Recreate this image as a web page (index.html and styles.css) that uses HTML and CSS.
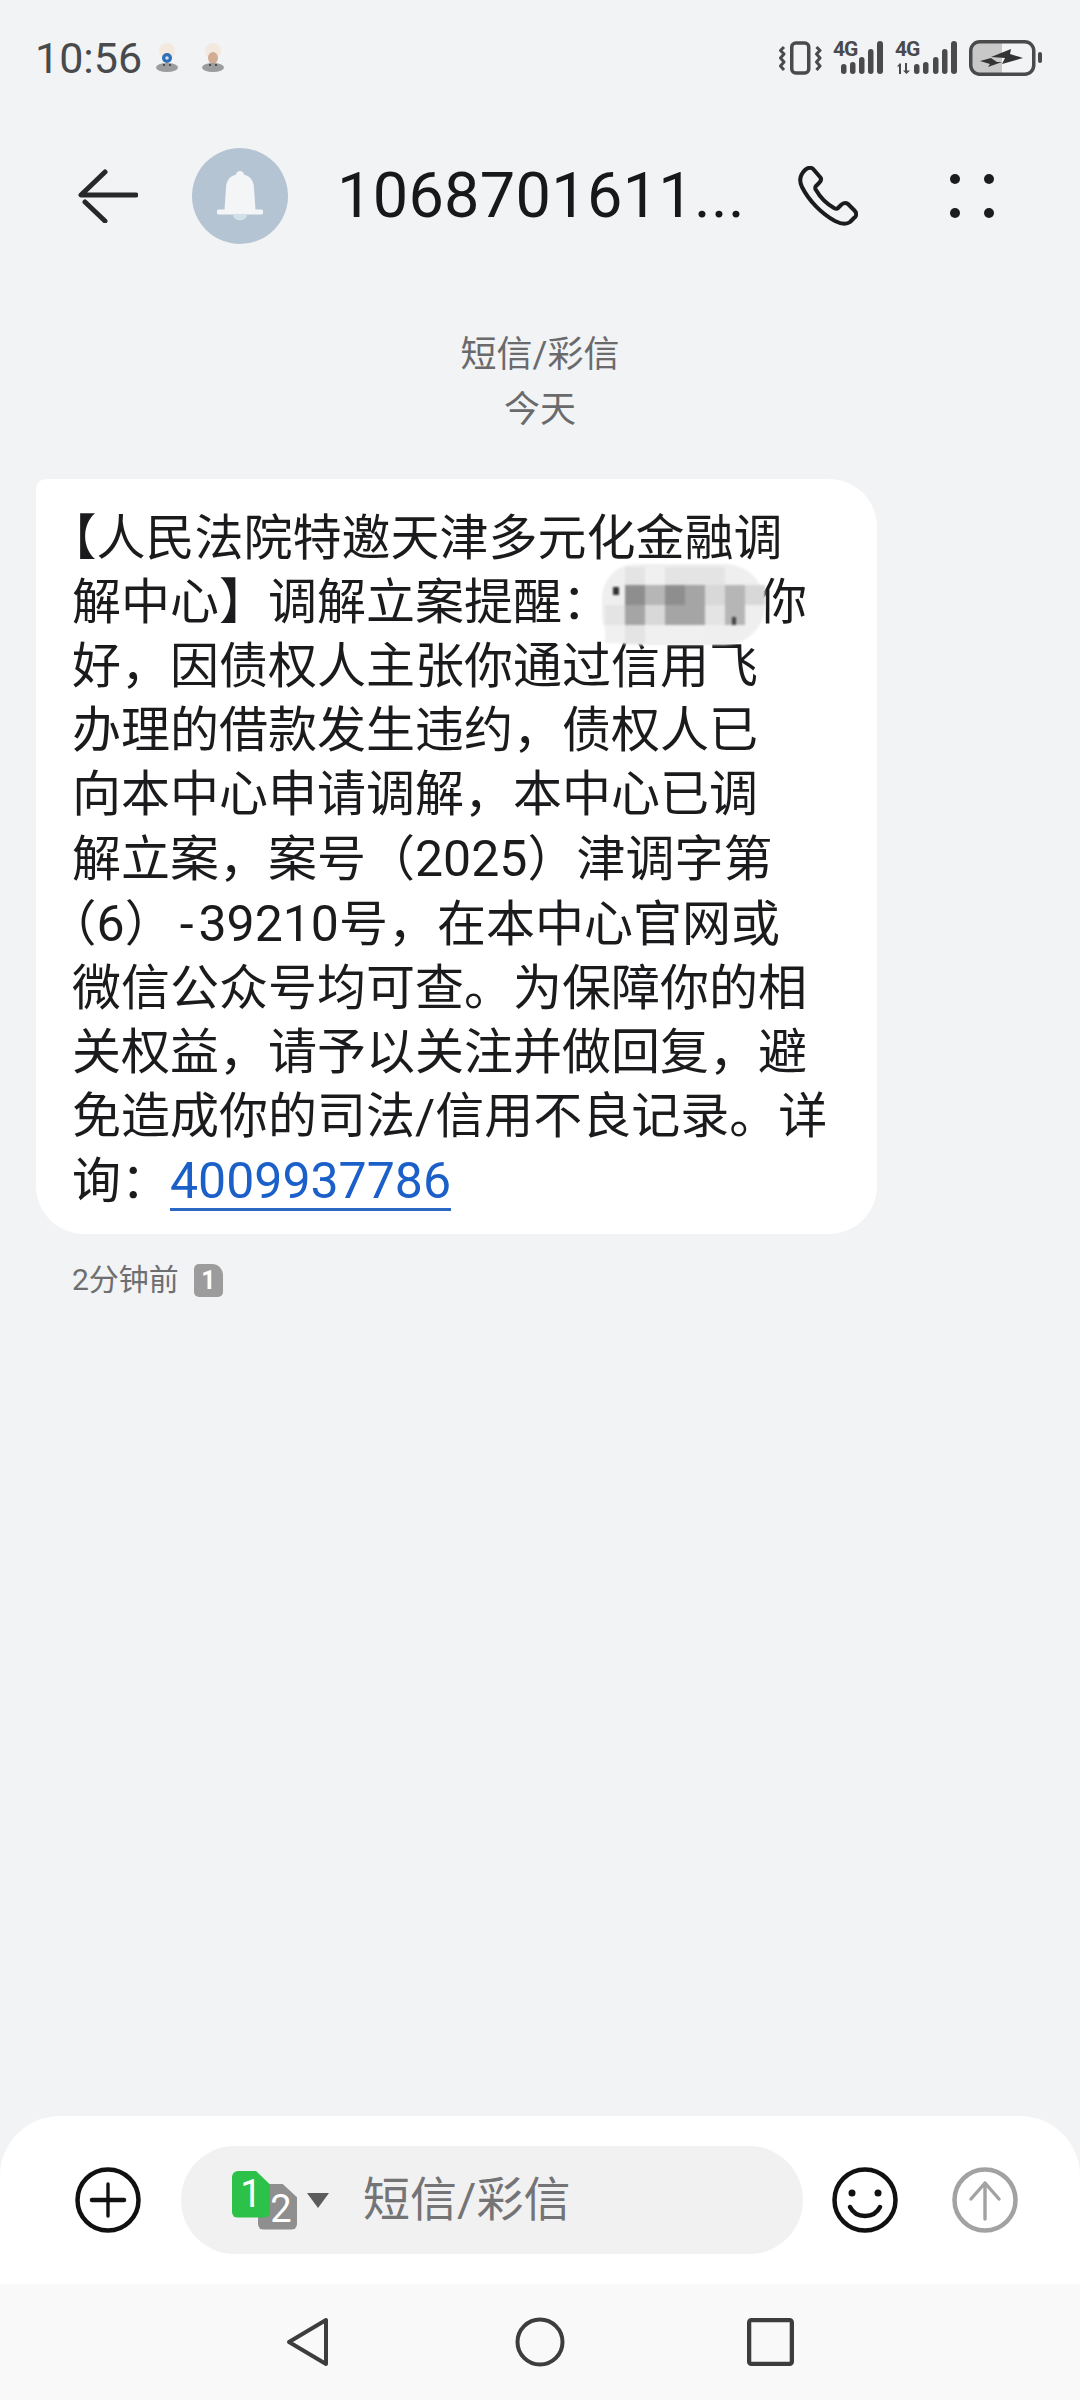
FILE: index.html
```html
<!DOCTYPE html>
<html lang="zh-CN">
<head>
<meta charset="utf-8">
<title>短信</title>
<link rel="stylesheet" href="styles.css">
</head>
<body>
<div class="screen">
  <div class="status">
    <div class="status-left">
      <span class="time">10:56</span>
      <svg class="mascot" viewBox="0 0 26 30"><ellipse cx="13" cy="8" rx="8" ry="8" fill="#f3e9df"/><circle cx="13" cy="15" r="5" fill="#2f6fb8"/><circle cx="13" cy="15" r="1.800" fill="#cfe0f2"/><ellipse cx="13" cy="24.500" rx="11" ry="4.500" fill="#9a9c9e"/><circle cx="10" cy="22" r="1" fill="#333"/><circle cx="16" cy="22" r="1" fill="#333"/></svg>
      <svg class="mascot" viewBox="0 0 26 30"><ellipse cx="13" cy="8" rx="8" ry="8" fill="#f3e9df"/><ellipse cx="13" cy="15" rx="5" ry="6" fill="#d2ad93"/><ellipse cx="13" cy="24.500" rx="11" ry="4.500" fill="#9a9c9e"/><circle cx="10" cy="22" r="1" fill="#333"/><circle cx="16" cy="22" r="1" fill="#333"/></svg>
    </div>
    <div class="status-right">
      <svg class="st-vib" viewBox="0 0 43 36" fill="none" stroke="#4a4a4c" stroke-linejoin="round"><rect x="12.750" y="3" width="17" height="30" rx="4" stroke-width="3.500"/><path d="M5 7L1.500 10.500 5 14 1.500 18 5 22 1.500 26 5 30" stroke-width="3"/><path d="M37.500 7L41 10.500 37.500 14 41 18 37.500 22 41 26 37.500 30" stroke-width="3"/></svg>
      <div class="st-sig">
        <svg viewBox="0 0 50 36" class="st-bars" fill="#4a4a4c"><rect x="8" y="24" width="5.500" height="10" rx="2.700"/><rect x="17" y="22" width="5.500" height="12" rx="2.700"/><rect x="26" y="17" width="5.500" height="17" rx="2.700"/><rect x="35" y="9" width="5.500" height="25" rx="2.700"/><rect x="44" y="1" width="6" height="33" rx="3"/></svg>
        <span class="st-4g">4G</span>
      </div>
      <div class="st-sig st-sig-wide">
        <svg viewBox="0 0 62 36" class="st-bars" fill="#4a4a4c"><path d="M4 34v-7.500H2l3-3.500 1 1v10zM10 23v7.500H8l3.500 3.500 3.500-3.500h-3V23z"/><rect x="19" y="24" width="5.500" height="10" rx="2.700"/><rect x="28" y="22" width="5.500" height="12" rx="2.700"/><rect x="38" y="17" width="5.500" height="17" rx="2.700"/><rect x="47" y="9" width="5.500" height="25" rx="2.700"/><rect x="56" y="1" width="6" height="33" rx="3"/></svg>
        <span class="st-4g">4G</span>
      </div>
      <svg class="st-bat" viewBox="0 0 73 36"><path d="M3 10a7 7 0 0 1 7-7h23v30H10a7 7 0 0 1-7-7z" fill="#c8c8c8"/><rect x="1.750" y="1.750" width="63" height="32.500" rx="9" fill="none" stroke="#4a4a4c" stroke-width="3.500"/><path d="M22 17l20-8-1 5 13 4-21 6 3-6z" fill="#333"/><path d="M11 21l11-3 6 4h5l-14 5 2-3z" fill="#333"/><rect x="69" y="12" width="4" height="11" rx="2" fill="#4a4a4c"/></svg>
    </div>
  </div>

  <div class="head">
    <svg class="ic-back" viewBox="0 0 60 54" fill="none" stroke="#26282a" stroke-width="5" stroke-linecap="round" stroke-linejoin="round"><path d="M27 3L3 26h55"/><path d="M7 33l20 19"/></svg>
    <div class="avatar">
      <svg viewBox="0 0 46 50" class="ic-bell"><path d="M23 0a4.500 4.500 0 0 1 4 3.500c7 2 10 7 10 14l1.500 21H44a2.500 2.500 0 0 1 0 5H2a2.500 2.500 0 0 1 0-5h5.500L9 17.500c0-7 3-12 10-14A4.500 4.500 0 0 1 23 0z" fill="#f3f5f7"/><path d="M16 44h14c-1 7-13 7-14 0z" fill="#d3dfe9"/></svg>
    </div>
    <div class="title">1068701611...</div>
    <svg class="ic-call" viewBox="0 0 60 60" fill="none" stroke="#1c1c1e" stroke-width="4" stroke-linejoin="round"><path d="M7 4C10 1 14 1 16 4L22 11C24 13 23 15 21 17L18 20C17 21 17 23 18 24 22 31 29 38 36 42 38 43 39 43 40 42L43 39C45 37 47 36 50 38L56 44C59 47 59 50 56 52L52 56C48 59 43 58 37 55 24 48 11 35 4 21 1 15 2 9 7 4Z"/></svg>
    <div class="dots"><i></i><i></i><i></i><i></i></div>
  </div>

  <div class="meta">
    <div>短信/彩信</div>
    <div>今天</div>
  </div>

  <div class="bubble">
    <div class="ln">【人民法院特邀天津多元化金融调</div>
    <div class="ln">解中心】调解立案提醒：<span class="redact"></span>你</div>
    <div class="ln">好，因债权人主张你通过信用飞</div>
    <div class="ln">办理的借款发生违约，债权人已</div>
    <div class="ln">向本中心申请调解，本中心已调</div>
    <div class="ln">解立案，案号（<span class="num">2025</span>）津调字第</div>
    <div class="ln">（<span class="num">6</span>）<span class="num hy">-</span><span class="num">39210</span>号，在本中心官网或</div>
    <div class="ln">微信公众号均可查。为保障你的相</div>
    <div class="ln">关权益，请予以关注并做回复，避</div>
    <div class="ln">免造成你的司法/信用不良记录。详</div>
    <div class="ln">询：<a class="link num">4009937786</a></div>
    <div class="mosaic">
      <i class="m-x"></i><i class="m1"></i><i class="m0"></i><i class="m1"></i><i class="m1"></i><i class="m1"></i><i class="m-x"></i><i class="m-x"></i>
      <i class="m-x"></i><i class="m4"></i><i class="m3"></i><i class="m4"></i><i class="m3b"></i><i class="m2"></i><i class="m3"></i><i class="m2"></i>
      <i class="m1"></i><i class="m3b"></i><i class="m2"></i><i class="m3b"></i><i class="m3b"></i><i class="m1"></i><i class="m3"></i><i class="m-x"></i>
      <i class="m0"></i><i class="m1"></i><i class="m0"></i><i class="m0"></i><i class="m0"></i><i class="m-x"></i><i class="m-x"></i><i class="m-x"></i>
      <b class="tick-a"></b><b class="tick-b"></b>
    </div>
  </div>

  <div class="stamp">
    <span>2分钟前</span>
    <span class="sim-mini">1</span>
  </div>

  <div class="spacer"></div>

  <div class="composer">
    <svg class="ic-round" viewBox="0 0 66 66" fill="none" stroke="#111" stroke-width="4.500"><circle cx="33" cy="33" r="30.500"/><path d="M33 17v32" stroke-width="3.400" stroke-linecap="round"/><path d="M17 33h32" stroke-width="4.500" stroke-linecap="round"/></svg>
    <div class="pill">
      <div class="sims">
        <i class="sim sim2"></i>
        <span class="sim sim1">1</span>
        <span class="sim-two">2</span>
      </div>
      <i class="caret"></i>
      <span class="placeholder">短信/彩信</span>
    </div>
    <svg class="ic-round ic-smile" viewBox="0 0 66 66" fill="none" stroke="#111" stroke-width="4.500"><circle cx="33" cy="33" r="30.500"/><circle cx="20" cy="26" r="3.500" fill="#111" stroke="none"/><circle cx="46" cy="26" r="3.500" fill="#111" stroke="none"/><path d="M18 40c6 12 24 12 30 0" stroke-width="4.500" stroke-linecap="round"/></svg>
    <svg class="ic-round ic-send" viewBox="0 0 66 66" fill="none" stroke="#a2a2a2" stroke-width="4.500"><circle cx="33" cy="33" r="30.500"/><path d="M33 52V16M19 32l14-16 14 16" stroke-width="3.400" stroke-linecap="round" stroke-linejoin="round"/></svg>
  </div>

  <div class="nav">
    <svg class="nav-ic" viewBox="0 0 44 50" fill="none" stroke="#3d3d3d" stroke-width="4" stroke-linejoin="round"><path d="M40 3v44L3 25z"/></svg>
    <svg class="nav-ic" viewBox="0 0 50 50" fill="none" stroke="#3d3d3d" stroke-width="4"><circle cx="25" cy="25" r="22.500"/></svg>
    <svg class="nav-ic nav-square" viewBox="0 0 44 46" fill="none" stroke="#3d3d3d" stroke-width="4" stroke-linejoin="round"><rect x="2" y="3" width="40" height="41" rx="2"/></svg>
  </div>
</div>
</body>
</html>
```
FILE: styles.css
```css
* { box-sizing: border-box; }
html, body { margin: 0; padding: 0; }
body {
  width: 1080px;
  height: 2400px;
  overflow: hidden;
  background: #f1f3f5;
  font-family: Roboto, "Noto Sans CJK SC", sans-serif;
  color: #1c1c1e;
}
.screen { display: flex; flex-direction: column; width: 1080px; height: 2400px; }

.status { height: 118px; padding: 31px 38px 0 35px; display: flex; justify-content: space-between; align-items: flex-start; }
.status-left { display: flex; align-items: center; height: 54px; }
.time { font-size: 43px; line-height: 54px; color: #484a4c; width: 119px; }
.mascot { width: 26px; height: 30px; margin-right: 20px; }
.status-right { display: flex; align-items: center; height: 54px; }
.st-vib { width: 43px; height: 36px; margin-right: 11px; }
.st-sig { position: relative; width: 50px; height: 36px; margin-right: 12px; }
.st-sig-wide { width: 62px; }
.st-4g { position: absolute; left: 0; top: 0; font-size: 21px; line-height: 18px; font-weight: 700; color: #4a4a4c; letter-spacing: -1px; }
.st-bars { display: block; width: 100%; height: 36px; }
.st-bat { width: 73px; height: 36px; }

.head { height: 156px; display: flex; align-items: center; padding-left: 78px; }
.ic-back { width: 60px; height: 54px; flex: none; }
.avatar { width: 96px; height: 96px; border-radius: 50%; background: #b4c4d3; margin-left: 54px; display: flex; align-items: center; justify-content: center; flex: none; }
.ic-bell { width: 46px; height: 50px; }
.title { font-size: 63px; line-height: 72px; letter-spacing: .3px; width: 413px; margin-left: 49px; color: #17181a; white-space: nowrap; }
.ic-call { width: 60px; height: 60px; margin-left: 48px; flex: none; }
.dots { display: grid; grid-template-columns: 10px 10px; column-gap: 24px; row-gap: 24px; margin-left: 92px; }
.dots i { width: 10px; height: 10px; border-radius: 50%; background: #1c1c1e; }

.meta { margin-top: 54px; text-align: center; font-size: 36px; line-height: 55px; color: #6a6a6c; }

.bubble {
  position: relative;
  margin: 41px 0 0 36px;
  width: 841px;
  height: 755px;
  padding: 28px 0 0 36px;
  background: #fff;
  border-radius: 10px 48px 48px 48px;
  font-size: 49px;
  line-height: 64px;
  color: #1b1b1d;
  text-spacing-trim: trim-start;
}
.ln { white-space: nowrap; }
.num { font-size: 50px; }
.hy { padding: 0 5px 0 6px; }
.redact { display: inline-block; width: 147px; }
.link { color: #1b5fc9; text-decoration: underline; text-decoration-color: #2a68c4; text-decoration-thickness: 3px; text-underline-offset: 10px; }
.mosaic {
  position: absolute;
  left: 569px;
  top: 88px;
  width: 160px;
  height: 76px;
  display: grid;
  grid-template-columns: repeat(8, 20px);
  grid-template-rows: 18px 20px 20px 18px;
  filter: blur(1.200px);
}
.mosaic::before { content: ""; position: absolute; inset: -3px 0 -2px -3px; border-radius: 34px 40px 40px 30px; background: #efefef; z-index: -1; }
.m-x { background: transparent; }
.m0 { background: #f0f0f0; }
.m1 { background: #e4e4e4; }
.m2 { background: #d8d8d8; }
.m3 { background: #b6b6b6; }
.m3b { background: #a5a5a5; }
.m4 { background: #8e8e8e; }
.tick-a { position: absolute; left: 8px; top: 20px; width: 6px; height: 8px; background: #333; }
.tick-b { position: absolute; left: 127px; top: 50px; width: 4px; height: 8px; background: #444; }

.stamp { display: flex; align-items: center; gap: 15px; margin: 28px 0 0 72px; font-size: 30px; line-height: 36px; color: #6e6e70; }
.sim-mini { width: 29px; height: 33px; border-radius: 5px 11px 5px 5px; background: #9c9c9c; color: #fff; font-size: 25px; line-height: 33px; font-weight: 700; text-align: center; }

.spacer { flex: 1; }

.composer {
  height: 168px;
  background: #fff;
  border-radius: 60px 60px 0 0;
  display: flex;
  align-items: center;
  padding: 0 62px 0 75px;
}
.ic-round { width: 66px; height: 66px; flex: none; }
.pill { width: 622px; height: 108px; margin-left: 40px; border-radius: 54px; background: #f1f1f1; display: flex; align-items: center; padding-left: 51px; flex: none; }
.sims { position: relative; width: 65px; height: 59px; flex: none; }
.sim { position: absolute; display: block; color: #fff; font-size: 38px; text-align: center; clip-path: polygon(0 0, 62% 0, 100% 30%, 100% 100%, 0 100%); }
.sim1 { left: 0; top: 0; width: 38px; height: 47px; line-height: 46px; background: #2cc24a; border-radius: 6px; }
.sim2 { left: 26px; top: 13px; width: 39px; height: 46px; background: #8f8f8f; border-radius: 6px; }
.sim-two { position: absolute; left: 37px; top: 15px; width: 24px; text-align: center; font-size: 38px; line-height: 46px; color: #fff; }
.caret { width: 0; height: 0; border-left: 11px solid transparent; border-right: 11px solid transparent; border-top: 15px solid #5c5c5c; margin-left: 10px; flex: none; }
.placeholder { font-size: 47px; margin-left: 34px; color: #747476; line-height: 60px; }
.ic-smile { margin-left: 29px; }
.ic-send { margin-left: 54px; }

.nav { height: 116px; background: #f9f9f9; display: grid; grid-template-columns: 44px 50px 44px; column-gap: 185px; align-items: center; justify-content: center; }
.nav-ic { display: block; }
.nav-square { margin-left: -3px; }
```
